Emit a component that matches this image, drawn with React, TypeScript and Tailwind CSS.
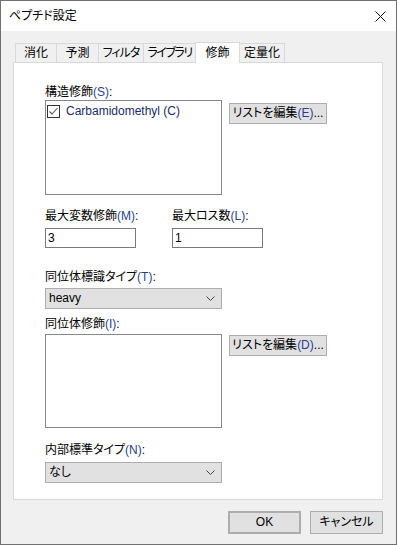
const font = { fontFamily: '"Liberation Sans", "Noto Sans CJK JP", sans-serif' };

const Label = ({ text, mn, className = '' }: { text: string; mn: string; className?: string }) => (
  <div className={`text-[12px] leading-[15px] text-black whitespace-nowrap ${className}`}>
    {text}
    <span className="text-[#2a3f8f]">({mn})</span>:
  </div>
);

const Btn = ({ children, className = '' }: { children: React.ReactNode; className?: string }) => (
  <button className={`flex items-center justify-center whitespace-nowrap bg-[#e1e1e1] border border-[#adadad] text-[12px] leading-[15px] text-black ${className}`}>
    {children}
  </button>
);

const Chevron = () => (
  <svg width="9" height="6" viewBox="0 0 9 6" className="mr-[6px]">
    <path d="M0.5 0.5 L4.5 4.5 L8.5 0.5" fill="none" stroke="#444" strokeWidth="1" />
  </svg>
);

const Select = ({ value, className = '' }: { value: string; className?: string }) => (
  <div className={`w-[177px] flex items-center justify-between bg-[#e1e1e1] border border-[#adadad] pl-[3px] text-[12px] leading-[15px] ${className}`}>
    <span>{value}</span>
    <Chevron />
  </div>
);

const tabs = [
  { name: '消化', w: 'w-[42px]', t: '' },
  { name: '予測', w: 'w-[43px]', t: '' },
  { name: 'フィルタ', w: 'w-[46px]', t: 'tracking-[-1px]' },
  { name: 'ライブラリ', w: 'w-[53px]', t: 'tracking-[-1.5px]' },
  { name: '修飾', w: 'w-[45px]', t: '', active: true },
  { name: '定量化', w: 'w-[46px]', t: '' },
];

export default function App() {
  return (
    <div style={font} className="w-[397px] h-[545px] flex flex-col bg-[#f0f0f0] border border-[#707070] text-black [font-feature-settings:'palt']">
      <div className="h-[30px] bg-white flex items-center justify-between pl-[8px] pr-[10px]">
        <span className="text-[12px] leading-[15px]">ペプチド設定</span>
        <svg width="11" height="11" viewBox="0 0 11 11">
          <path d="M0.5 0.5 L10.5 10.5 M10.5 0.5 L0.5 10.5" stroke="#111" strokeWidth="1" />
        </svg>
      </div>

      <div className="pl-[12px] pt-[10px]">
        <div className="flex items-end h-[21px] pl-[2px]">
          {tabs.map((t) =>
            t.active ? (
              <div
                key={t.name}
                className={`${t.w} h-[21px] -mb-px -mr-px relative z-10 bg-white border-t border-l border-r border-[#d9d9d9] flex justify-center pt-[3px] whitespace-nowrap text-[12px] leading-[15px] ${t.t}`}
              >
                {t.name}
              </div>
            ) : (
              <div
                key={t.name}
                className={`${t.w} h-[19px] bg-[#f0f0f0] border-t border-l border-r border-[#d9d9d9] -mr-px flex justify-center pt-[2px] whitespace-nowrap text-[12px] leading-[15px] ${t.t}`}
              >
                {t.name}
              </div>
            )
          )}
        </div>

        <div className="w-[370px] h-[438px] bg-white border border-[#d9d9d9] pl-[31px]">
          <Label text="構造修飾" mn="S" className="mt-[22px]" />
          <div className="flex items-start">
            <div className="w-[177px] h-[95px] border border-[#828790] pt-[3px] pl-[1px]">
              <div className="flex items-center gap-[6px]">
                <div className="w-[13px] h-[13px] border border-[#333] flex items-center justify-center bg-white">
                  <svg width="11" height="11" viewBox="0 0 11 11">
                    <path d="M1.5 5.5 L4 8 L9.5 2" fill="none" stroke="#555" strokeWidth="1.1" />
                  </svg>
                </div>
                <span className="text-[12px] leading-[15px] text-[#1a2a6a]">Carbamidomethyl (C)</span>
              </div>
            </div>
            <Btn className="ml-[7px] mt-[3px] w-[98px] h-[21px]">
              リストを編集<span className="text-[#2a3f8f]">(E)</span>...
            </Btn>
          </div>

          <div className="flex mt-[14px]">
            <div className="w-[127px]">
              <Label text="最大変数修飾" mn="M" />
              <div className="mt-[4px] w-[91px] h-[20px] border border-[#7a7a7a] pl-[2px] text-[12px] leading-[18px]">3</div>
            </div>
            <div>
              <Label text="最大ロス数" mn="L" />
              <div className="mt-[4px] w-[91px] h-[20px] border border-[#7a7a7a] pl-[2px] text-[12px] leading-[18px]">1</div>
            </div>
          </div>

          <Label text="同位体標識タイプ" mn="T" className="mt-[22px]" />
          <Select value="heavy" className="mt-[3px] h-[21px]" />

          <Label text="同位体修飾" mn="I" className="mt-[8px]" />
          <div className="flex items-start mt-[2px]">
            <div className="w-[177px] h-[94px] border border-[#828790]" />
            <Btn className="ml-[7px] mt-[1px] w-[98px] h-[21px]">
              リストを編集<span className="text-[#2a3f8f]">(D)</span>...
            </Btn>
          </div>

          <Label text="内部標準タイプ" mn="N" className="mt-[15px]" />
          <Select value="なし" className="mt-[4px] h-[21px]" />
        </div>
      </div>

      <div className="flex justify-end gap-[9px] mt-[11px] pr-[13px]">
        <Btn className="w-[73px] h-[23px] border-2 border-[#0078d7]">OK</Btn>
        <Btn className="w-[73px] h-[23px]">キャンセル</Btn>
      </div>
    </div>
  );
}
